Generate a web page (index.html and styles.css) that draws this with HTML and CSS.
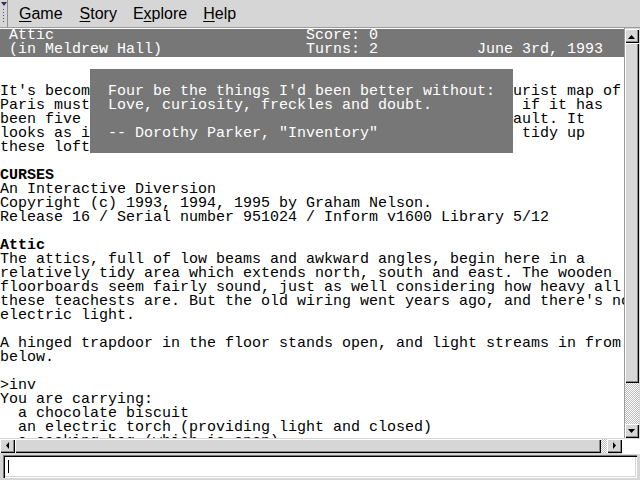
FILE: index.html
```
<!DOCTYPE html>
<html>
<head>
<meta charset="utf-8">
<link rel="stylesheet" href="styles.css">
</head>
<body>
<div class="app">
  <div class="menubar">
    <div class="handle"><span class="tri"></span><span class="dots"></span></div>
    <nav class="menus">
      <span class="menu"><u>G</u>ame</span>
      <span class="menu"><u>S</u>tory</span>
      <span class="menu">E<u>x</u>plore</span>
      <span class="menu"><u>H</u>elp</span>
    </nav>
  </div>
  <div class="main">
    <div class="pane">
      <div class="status">
        <span> Attic</span><span>Score: 0</span><span></span>
        <span> (in Meldrew Hall)</span><span>Turns: 2</span><span>June 3rd, 1993</span>
      </div>
<pre class="text">It's become a matter of pride now not to give up. That tourist map of
Paris must be up here somewhere in all this clutter, even if it has
been five years since your last visit, and this is your fault. It
looks as if nobody's been up here for years. High time to tidy up
these lofts.

<b>CURSES</b>
An Interactive Diversion
Copyright (c) 1993, 1994, 1995 by Graham Nelson.
Release 16 / Serial number 951024 / Inform v1600 Library 5/12

<b>Attic</b>
The attics, full of low beams and awkward angles, begin here in a
relatively tidy area which extends north, south and east. The wooden
floorboards seem fairly sound, just as well considering how heavy all
these teachests are. But the old wiring went years ago, and there's no
electric light.

A hinged trapdoor in the floor stands open, and light streams in from
below.

&gt;inv
You are carrying:
  a chocolate biscuit
  an electric torch (providing light and closed)
  a sacking bag (which is open)</pre>
<pre class="quote">Four be the things I'd been better without:
Love, curiosity, freckles and doubt.

-- Dorothy Parker, "Inventory"</pre>
    </div>
    <div class="vscroll">
      <div class="btn"><svg width="8" height="5" viewBox="0 0 8 5"><path d="M0 5h7L3.5 1z" fill="#000"/></svg></div>
      <div class="vthumb"></div>
      <div class="vtrough"></div>
      <div class="btn"><svg width="8" height="5" viewBox="0 0 8 5"><path d="M0 0h7L3.5 4z" fill="#000"/></svg></div>
    </div>
  </div>
  <div class="hscroll">
    <div class="btn hbtn"><svg width="5" height="8" viewBox="0 0 5 8"><path d="M4 0v7L1 3.5z" fill="#000"/></svg></div>
    <div class="hthumb"></div>
    <div class="htrough"></div>
    <div class="btn hbtn"><svg width="5" height="8" viewBox="0 0 5 8"><path d="M1 0v7L4 3.5z" fill="#000"/></svg></div>
    <div class="corner"></div>
  </div>
  <div class="inputrow">
    <div class="input"><span class="caret"></span></div>
  </div>
</div>
</body>
</html>
```
FILE: styles.css
```
html, body {
  margin: 0;
  padding: 0;
  background: #ffffff;
}
.app {
  width: 640px;
  height: 480px;
  display: flex;
  flex-direction: column;
  overflow: hidden;
}
.menubar {
  height: 27px;
  background: #d6d6d6;
  border-bottom: 1px solid #9a9a9a;
  display: flex;
  align-items: stretch;
  flex: none;
}
.handle {
  width: 8px;
  border-right: 1px solid #8e8e8e;
  display: flex;
  flex-direction: column;
  align-items: center;
  padding-top: 2px;
  box-sizing: border-box;
}
.tri {
  width: 0;
  height: 0;
  border-left: 3px solid transparent;
  border-right: 3px solid transparent;
  border-top: 4px solid #303060;
}
.dots {
  margin-top: 2px;
  width: 3px;
  flex: 1;
  margin-bottom: 3px;
  background-image: radial-gradient(circle, #4a4a7a 0.6px, transparent 0.9px);
  background-size: 3px 3px;
}
.menus {
  display: flex;
  align-items: center;
  padding-left: 2px;
  font-family: "Liberation Sans", Arial, sans-serif;
  font-size: 16px;
  color: #000;
}
.menu {
  padding: 0 8px;
}
.menu:first-child {
  padding-left: 9px;
  padding-right: 9px;
}
.menu u {
  text-decoration-thickness: 1px;
  text-underline-offset: 2px;
}
.main {
  display: flex;
  height: 410px;
  flex: none;
}
.pane {
  position: relative;
  flex: 1;
  overflow: hidden;
  background: #fff;
  font-family: "Liberation Mono", "Courier New", monospace;
  font-size: 15px;
  line-height: 14px;
}
.status {
  background: #777777;
  color: #fff;
  height: 28px;
  margin-top: 1px;
  display: grid;
  grid-template-columns: 34ch 19ch auto;
  white-space: pre;
}
.text {
  margin: 0;
  padding-top: 28px;
  font: inherit;
  white-space: pre;
  color: #000;
}
.text b {
  font-weight: bold;
}
.quote {
  position: absolute;
  left: 90px;
  top: 41px;
  width: 423px;
  height: 84px;
  box-sizing: border-box;
  margin: 0;
  padding: 16px 0 0 18px;
  background: #777777;
  color: #fff;
  font: inherit;
  white-space: pre;
}
.vscroll {
  width: 16px;
  flex: none;
  display: flex;
  flex-direction: column;
  background: #d6d6d6;
  border-left: 1px solid #9a9a9a;
  box-sizing: border-box;
  padding: 1px 1px 0 0;
}
.btn {
  height: 14px;
  flex: none;
  background: #d6d6d6;
  box-shadow: inset 1px 1px 0 #fff, inset -1px -1px 0 #000, inset -2px -2px 0 #8a8a8a;
  display: flex;
  align-items: center;
  justify-content: center;
}
.vthumb {
  flex: none;
  height: 340px;
  background: #d6d6d6;
  box-shadow: inset 1px 1px 0 #fff, inset -1px -1px 0 #000, inset -2px -2px 0 #8a8a8a;
}
.vtrough, .htrough {
  flex: 1;
  background-color: #fff;
  background-image: repeating-conic-gradient(#bdbdbd 0 25%, #ffffff 0 50%);
  background-size: 2px 2px;
}
.hscroll {
  height: 16px;
  flex: none;
  display: flex;
  background: #d6d6d6;
  box-sizing: border-box;
  padding-top: 1px;
}
.hbtn {
  width: 15px;
  height: 14px;
}
.hthumb {
  width: 586px;
  flex: none;
  height: 14px;
  background: #d6d6d6;
  box-shadow: inset 1px 1px 0 #fff, inset -1px -1px 0 #000, inset -2px -2px 0 #8a8a8a;
}
.htrough {
  width: 6px;
  flex: none;
  height: 14px;
}
.corner {
  flex: 1;
  background: #fff;
}
.inputrow {
  flex: 1;
  background: #d6d6d6;
  padding: 1px 3px 2px 3px;
  display: flex;
}
.input {
  flex: 1;
  background: #fff;
  box-shadow: inset 1px 1px 0 #7a7a7a, inset 2px 2px 0 #000, inset -1px -1px 0 #fff, inset -2px -2px 0 #d6d6d6;
  display: flex;
  align-items: center;
  padding-left: 5px;
}
.caret {
  width: 1px;
  height: 13px;
  background: #000;
}
```
